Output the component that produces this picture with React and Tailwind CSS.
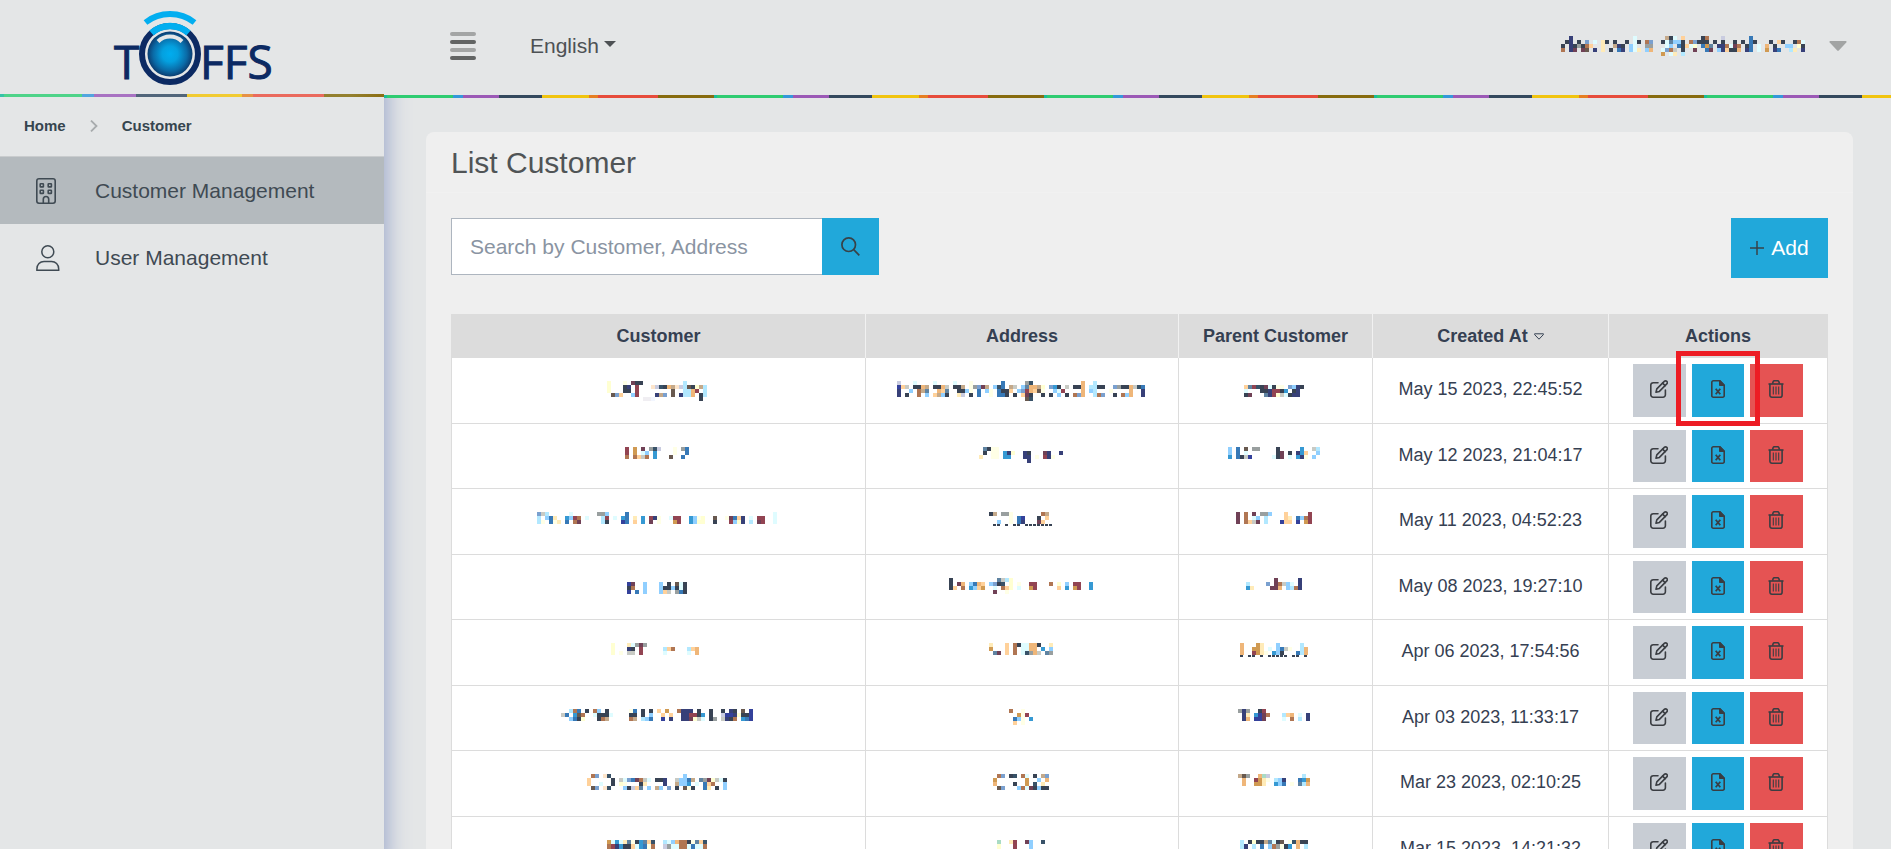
import React from 'react';

const PALETTE = {
  k: '#384354', n: '#374078', i: '#34419b', b: '#3779b7', c: '#3699d3', l: '#90cfff',
  s: '#b2e8ff', w: '#dffcff', W: '#f2f6ff', y: '#ffffd2', Y: '#ffffe6', e: '#ffebb8',
  o: '#efb679', t: '#d09a52', r: '#924452', m: '#704156', u: '#b07653', g: '#999f9f',
  q: '#c8cac4', p: '#ffd19a', d: '#5f83a1', a: '#7aa0cf', v: '#c9cce0', x: '#68594f',
  z: '#385268', f: '#fde5cb', F: '#f0eef2', h: '#c4a98a', G: '#a9dbc4',
};

const CELL = 4;

/* Pixelated block that stands in for a masked value. */
function Masked({ rows, tail, label }) {
  const cols = Math.max(...rows.map((r) => r.length));
  const count = Math.max(rows.length, 5);
  return (
    <svg
      role="img"
      aria-label={label}
      width={cols * CELL}
      height={count * CELL}
      shapeRendering="crispEdges"
      className="inline-block align-middle"
    >
      {rows.flatMap((row, y) =>
        [...row].map((ch, x) =>
          PALETTE[ch] ? (
            <rect key={`${x}-${y}`} x={x * CELL} y={y * CELL} width={CELL} height={CELL} fill={PALETTE[ch]} />
          ) : null
        )
      )}
      {tail
        ? [...tail].map((ch, x) =>
            PALETTE[ch] ? (
              <rect key={`t${x}`} x={x * CELL} y={rows.length * CELL} width={3} height={2} fill={PALETTE[ch]} />
            ) : null
          )
        : null}
    </svg>
  );
}

const ACCOUNT = [
  '..n...............w.......hkw.p....ku...v......b.............',
  '.kn.k.a.w.ek.k..k.wk.ua..kwdllk.uakkk.k.k..k.k.bk...k.pk..kuw',
  'k.nkgkup..e..hnk.lw..gg...wl.bkpwy.btd.nnuwmu.kb.w.o.k..ll.yk',
  'u.nm.mx.n.e.k.bn.lwe.lo..wauq.k..m..bm.lnpkko.nb.w.t.nb..se.n',
  '.........................t.we.s',
];

const ROWS = [
  {
    created: 'May 15 2023, 22:45:52',
    marked: true,
    customer: [
      'y...Y.mkk..........s.....',
      'y...kn.r...fvzkohfvsxkyhs',
      'y...kk.r........x..ssor.s',
      '.xap..lr....nha.x.nsso.ks',
      '.........FFW...........k.',
    ],
    address: [
      'v...w....w....w...Y.......b.....gz............o..s............',
      'ipq.kkoh.kkoq.kkh.Ygamh.lzb.hq.ldoohy.ack.q.kko.sskk..agkkoqzb',
      'n..l.uhd..opd..kklY.b.lY.bkkp.laropxY..lwr....o.ls...Y....o..n',
      'n.k..u.l.phlk..ev.k.b..Y.bbk.k.pmk..k.k.l.k.uao..sua..k.ulo..n',
      '................................xz............................',
    ],
    parent: ['', 'pdrzkmwkYY.alnk', 'w...kknrrkc.kn.', 'km...dnryqwknn.'],
  },
  {
    created: 'May 12 2023, 21:04:17',
    customer: ['r.t.m.gzv...Y.gb', 'r.t.wl.c....Y..b', 'u.upqu.c...x..b.'],
    address: ['.dkYY................', '.k.YY.cny..nk...mn..n', 'e..YY.cc...nn.Y.rnY', '............n'],
    parent: ['l.b.x.gg....k.....c..qs', 'l.b.w.......km.k.ncp..l', 'c.bkqi.....wkm.w.cnY.l.'],
  },
  {
    created: 'May 11 2023, 04:52:23',
    customer: [
      'aqs.....w......ggl....b....................................w',
      's.lbe..clru.w...sr.w.cb.e.c.rnY..wrr..clYy..x..Ymbpn.w.rr..w',
      'sY.bYe.b.um.....sk...ib.p.c.m.Y...tr..clyy..k...rlyn.s.mr..w',
    ],
    address: ['kh.ggY.......uh.', '.....Y.bi...k.p.', '..l..Y.bn...mp..'],
    addressTail: '.kk.k.kk.kkkkkkk',
    parent: ['m.u.m.ggl...p.....r', 'm.u.wl.s....pe.blur', 'm.upqm.s...ipp.i.tr'],
  },
  {
    created: 'May 08 2023, 19:27:10',
    customer: ['', 'im..l...l.k.xwk', 'ku..l...lkklkwk', 'i.b.l...lpq.gbk'],
    address: [
      'k...........dqsy....................',
      'k.mo.lbop.lakz.y.Y..rr...u.y.l.rr..c',
      'kp.u.clpt..w.upy.w..tr.....p.c.tr..c',
      '...........m..Y',
    ],
    parent: ['.......m.....n', 's....a.muqlw.n', 'ce....mmo.lsun'],
  },
  {
    created: 'Apr 06 2023, 17:54:56',
    customer: ['y...ewgmg..............', 'y...nk.r.....spu...spo', 'y.Y.qq.r.....w.....w.o'],
    address: ['e...p.ukwwook..e', 't...p.u.wwoo.c.l', '.dm.p.u.wzgoq.dg'],
    parent: ['o...te...l.....s.', 'o..tte.w.lbqY..so', 'o..rteY.clk...bso'],
    parentTail: 'k.kk.k.kkkkk.kk.k',
  },
  {
    created: 'Apr 03 2023, 11:33:17',
    customer: [
      '..sub.k.ul.k.....Yb.k.k.p.t..unnn.k..k..k.nk.x.i',
      'qb.cxu..wkkkw....kk.k.l..p.p..nnrrkc.k..viinykki',
      '..lbky...kuh.....uh.slb..i.n..nnmyqw.kg.qnku.cbi',
    ],
    address: ['u..Y..', '..tYr.', '.blY.c', '.p.Y..'],
    parent: ['gng..kr...........', '.ne.cimu...spo.w.n', '.no.iim....w.u.s.n'],
  },
  {
    created: 'Mar 23 2023, 02:10:25',
    customer: [
      '.ua.fz..................l..........',
      'p.....k.qwabmuqw.kkn..qllbh.dgmyqwk',
      'p..w..k.yY...ke....n..hllc.w.bpu..l',
      '.xa.fz...lkvpd.l.hl.a.k.xYk..be.k.l',
    ],
    address: ['.ua.kz.uw.k.ha', 't.......t..l.o', 'o....k..t.z.e.', '.xa...luwmklkk'],
    parent: ['hxg..oGv........s.', '.o..rteY.sln...bct', '.o..tte..clb.Y.dso'],
  },
  {
    created: 'Mar 15 2023, 14:21:32',
    customer: ['twcwedYkcdpz..swlouukYdpz', 'urnckkpwcbYu..vgwwuuwbwwu', 'urnckkpwcbYu..vgwwuuwbwwu'],
    address: ['G..er..ml..z', 'y...r...l...', 'y...r...l...'],
    parent: ['s.kykkhdwkx.Yzokk', 'sn.s.b.lugYkc.o.s', 'sn.s.b.lugYkc.o.s'],
  },
];

function Logo() {
  return (
    <svg width="180" height="84" viewBox="106 4 180 84" aria-label="TOFFS" role="img" className="overflow-visible">
      <defs>
        <radialGradient id="lens" cx="50%" cy="50%" r="50%">
          <stop offset="0" stopColor="#00adef" />
          <stop offset="0.35" stopColor="#04a0df" />
          <stop offset="0.75" stopColor="#0a6aa6" />
          <stop offset="1" stopColor="#0b3c70" />
        </radialGradient>
      </defs>
      <g fill="#0c2a63" stroke="#0c2a63" strokeWidth="1" className="font-['Open_Sans',sans-serif] text-[46px] font-medium">
        <text x="114" y="78">T</text>
        <text x="200" y="78">FFS</text>
      </g>
      <g fill="none">
        <circle cx="170" cy="53" r="28" stroke="#0c2a63" strokeWidth="6" />
        <path d="M151.5 32 A28 28 0 0 1 188.500 32" stroke="#02aef0" strokeWidth="6.500" />
        <path d="M145.500 21.500 A40 40 0 0 1 194.500 21.500" stroke="#02aef0" strokeWidth="6" />
      </g>
      <circle cx="170" cy="53" r="22.500" fill="url(#lens)" />
      <path d="M158 40.500 A17 17 0 0 1 182 40.500" fill="none" stroke="#e4e6e7" strokeWidth="4" />
    </svg>
  );
}

function BuildingIcon() {
  return (
    <svg width="20" height="26" viewBox="0 0 20 26" fill="none" stroke="currentColor" strokeWidth="1.600" aria-hidden="true">
      <rect x="0.800" y="0.800" width="18.400" height="24.400" rx="2.200" />
      <rect x="4.200" y="5.700" width="3.200" height="3.200" rx="0.500" />
      <rect x="12.200" y="5.700" width="3.200" height="3.200" rx="0.500" />
      <rect x="4.200" y="12.200" width="3.200" height="3.200" rx="0.500" />
      <rect x="12.200" y="12.200" width="3.200" height="3.200" rx="0.500" />
      <path d="M7.300 25.300 V21.200 A2.700 2.700 0 0 1 12.700 21.200 V25.300" />
    </svg>
  );
}

function UserIcon() {
  return (
    <svg width="24" height="26" viewBox="0 0 24 26" fill="none" stroke="currentColor" strokeWidth="1.500" aria-hidden="true">
      <circle cx="11.800" cy="6.800" r="6" />
      <path d="M0.900 25.200 V24 C0.900 19.500 4 16.500 8 16.500 H15.500 C19.500 16.500 22.700 19.500 22.700 24 V25.200 Z" />
    </svg>
  );
}

function EditIcon() {
  return (
    <svg width="18" height="18" viewBox="0 0 18 18" fill="none" stroke="currentColor" strokeWidth="1.600" strokeLinecap="round" strokeLinejoin="round" aria-hidden="true">
      <path d="M8 2.700 H3.200 A2.400 2.400 0 0 0 0.800 5.100 V14.800 A2.400 2.400 0 0 0 3.200 17.200 H13 A2.400 2.400 0 0 0 15.400 14.800 V10" />
      <path d="M6 12.300 L6.800 8.900 L14.300 1.400 A1.650 1.650 0 0 1 16.800 3.900 L9.400 11.400 Z" />
      <path d="M12.600 3.100 L15.100 5.600" />
    </svg>
  );
}

function FileIcon() {
  return (
    <svg width="14" height="18" viewBox="0 0 14 18" fill="none" stroke="currentColor" strokeWidth="1.600" strokeLinejoin="round" aria-hidden="true">
      <path d="M8.800 0.800 H2.300 A1.500 1.500 0 0 0 0.800 2.300 V15.700 A1.500 1.500 0 0 0 2.300 17.200 H11.700 A1.500 1.500 0 0 0 13.200 15.700 V5.200 Z" />
      <path d="M8.800 0.800 V5.200 H13.200 Z" fill="currentColor" />
      <path d="M4.700 8.700 L9.300 14.300 M9.300 8.700 L4.700 14.300" strokeWidth="1.800" />
    </svg>
  );
}

function TrashIcon() {
  return (
    <svg width="16" height="18" viewBox="0 0 16 18" fill="none" stroke="currentColor" strokeWidth="1.600" aria-hidden="true">
      <path d="M0.500 4 H15.500" />
      <path d="M4.500 3.700 L5.200 1.600 Q5.500 0.800 6.300 0.800 H9.700 Q10.500 0.800 10.800 1.600 L11.500 3.700" />
      <path d="M1.900 4 V15.200 A2 2 0 0 0 3.900 17.200 H12.100 A2 2 0 0 0 14.100 15.200 V4" />
      <path d="M5.300 6.500 V14.500 M8 6.500 V14.500 M10.700 6.500 V14.500" strokeWidth="1.100" />
    </svg>
  );
}

function NavItem({ icon, active, children }) {
  return (
    <a
      href="#"
      aria-current={active ? 'page' : undefined}
      className={`flex h-[67px] items-center pl-9 text-[21px] text-[#3f4a53] ${active ? 'bg-[#b4babe]' : ''}`}
    >
      <span className="w-[59px]">{icon}</span>
      {children}
    </a>
  );
}

function Heading({ children }) {
  return (
    <th scope="col" className="border-r border-[#f1f1f1] font-bold last:border-[#dcdcdc]">
      {children}
    </th>
  );
}

const CELL_CLASS = 'border-r border-b border-[#dcdcdc] p-0';
const MASKED_CELL_CLASS = 'border-r border-b border-[#dcdcdc] p-0 pr-[3px]';
const ACTION_CLASS = 'flex items-center justify-center pb-[3px] group-odd:h-[53px] group-even:h-[52px]';

export default function App() {
  return (
    <div className="flex h-screen overflow-hidden bg-[#e4e6e7] font-['Liberation_Sans',Arial,sans-serif] text-[#354052]">
      <aside className="z-10 flex w-96 shrink-0 flex-col bg-[#e4e6e7] shadow-[2px_20px_22px_0_#97a4c9]">
        <div className="flex h-[94px] items-center justify-center pl-2">
          <Logo />
        </div>
        <div className="h-[3px] bg-[linear-gradient(to_right,#35c3a8_4px,#4ed389_4px_82px,#52a5df_82px_94px,#a872c2_94px_136px,#51657a_136px_187px,#f1cb32_187px_242px,#e69147_242px_253px,#ea6a5e_253px_324px,#93802f_324px_350px,#8b6d12_384px)]" />
        <nav aria-label="Breadcrumb" className="flex h-[60px] items-center border-b border-[#c9ccce] pb-px pl-6 text-[15px] font-bold text-[#36454f]">
          <a href="#">Home</a>
          <svg width="8" height="12" viewBox="0 0 8 12" className="mx-6 shrink-0" fill="none" stroke="#a7abad" strokeWidth="1.800" aria-hidden="true">
            <path d="M1 0.600 L6.500 6 L1 11.400" />
          </svg>
          <a href="#">Customer</a>
        </nav>
        <nav aria-label="Main">
          <NavItem active icon={<BuildingIcon />}>Customer Management</NavItem>
          <NavItem icon={<UserIcon />}>User Management</NavItem>
        </nav>
      </aside>

      <div className="flex min-w-0 flex-1 flex-col">
        <header className="z-20 shrink-0 bg-[#e4e6e7]">
          <div className="flex h-[95px] items-center pr-11 pb-[3px] pl-[66px]">
            <button type="button" aria-label="Toggle menu" className="flex w-[26px] flex-col gap-1">
              <span className="h-1 rounded-sm bg-[#a3a5a5]" />
              <span className="h-1 rounded-sm bg-[#626464]" />
              <span className="h-1 rounded-sm bg-[#a3a5a5]" />
              <span className="h-1 rounded-sm bg-[#626464]" />
            </button>
            <button type="button" className="ml-[54px] flex items-center gap-[5px] text-[21px] text-[#4d5154]">
              English
              <svg width="12" height="6" viewBox="0 0 12 6" fill="currentColor" className="mb-1" aria-hidden="true">
                <path d="M0 0 H12 L6 6 Z" />
              </svg>
            </button>
            <button type="button" className="ml-auto flex items-center gap-6">
              <Masked rows={ACCOUNT} label="Account" />
              <svg width="18" height="10" viewBox="0 0 18 10" fill="#a2a4a4" aria-hidden="true">
                <path d="M1 0 H17 Q18 0.300 17.300 1.400 L9.800 9.400 Q9 10 8.200 9.400 L0.700 1.400 Q0 0.300 1 0 Z" />
              </svg>
            </button>
          </div>
          <div className="h-[3px] bg-[repeating-linear-gradient(to_right,#1abc9c_0_3px,#2ecc71_3px_69px,#3498db_69px_79px,#9b59b6_79px_115px,#34495e_115px_158px,#f1c40f_158px_205px,#e67e22_205px_214px,#e74c3c_214px_274px,#876b0e_274px_330px)]" />
        </header>

        <main className="min-h-0 flex-1 overflow-y-auto pt-[34px] pr-[38px] pl-[42px] [scrollbar-width:none]">
          <section className="relative z-10 rounded-t-lg bg-[#efefef]">
            <h1 className="h-[61px] border-b border-[#f1f1f1] px-[25px] pt-[13px] text-[30px] leading-9 text-[#505456]">List Customer</h1>
            <div className="px-[25px] pt-[25px]">
              <div className="flex items-start justify-between">
                <form role="search" className="flex h-[57px]" onSubmit={(e) => e.preventDefault()}>
                  <input
                    type="search"
                    aria-label="Search by Customer, Address"
                    placeholder="Search by Customer, Address"
                    className="w-[371px] border border-r-0 border-[#adb5bf] bg-white px-[18px] text-[21px] outline-none placeholder:text-[#8a94a2]"
                  />
                  <button type="submit" aria-label="Search" className="flex w-[57px] items-center justify-center bg-[#21a8da] pr-px pb-px text-[#374248]">
                    <svg width="19" height="19" viewBox="0 0 19 19" fill="none" stroke="currentColor" strokeWidth="1.700" aria-hidden="true">
                      <circle cx="7.700" cy="7.700" r="6.800" />
                      <path d="M12.700 12.700 L18.300 18.300" />
                    </svg>
                  </button>
                </form>
                <button type="button" className="flex h-[60px] w-[97px] items-center justify-center gap-[7px] bg-[#21a8da] text-[21px] text-white">
                  <svg width="14" height="14" viewBox="0 0 14 14" stroke="#374248" strokeWidth="1.500" aria-hidden="true">
                    <path d="M7 0 V14 M0 7 H14" />
                  </svg>
                  Add
                </button>
              </div>

              <table className="mt-9 w-full table-fixed border-separate border-spacing-0 border-l border-[#dcdcdc] text-center text-[18px]">
                <colgroup>
                  <col className="w-[414px]" />
                  <col className="w-[313px]" />
                  <col className="w-[194px]" />
                  <col className="w-[236px]" />
                  <col className="w-[219px]" />
                </colgroup>
                <thead>
                  <tr className="h-11 bg-[#dcdcdc]">
                    <Heading>Customer</Heading>
                    <Heading>Address</Heading>
                    <Heading>Parent Customer</Heading>
                    <Heading>
                      <button type="button" className="inline-flex items-center gap-1.5 font-bold">
                        Created At
                        <svg width="10" height="7" viewBox="0 0 10 7" fill="none" stroke="currentColor" strokeLinejoin="round" aria-hidden="true">
                          <path d="M0.600 0.800 H9.400 V1.600 L5 6.200 L0.600 1.600 Z" />
                        </svg>
                      </button>
                    </Heading>
                    <Heading>Actions</Heading>
                  </tr>
                </thead>
                <tbody>
                  {ROWS.map((row) => (
                    <tr key={row.created} className="group bg-white">
                      <td className={MASKED_CELL_CLASS}>
                        <Masked rows={row.customer} label="Customer" />
                      </td>
                      <td className={MASKED_CELL_CLASS}>
                        <Masked rows={row.address} tail={row.addressTail} label="Address" />
                      </td>
                      <td className={MASKED_CELL_CLASS}>
                        <Masked rows={row.parent} tail={row.parentTail} label="Parent customer" />
                      </td>
                      <td className="border-r border-b border-[#dcdcdc] p-0 pb-0.5">{row.created}</td>
                      <td className={CELL_CLASS}>
                        <div className="flex justify-center gap-1.5 py-1.5 text-[#3a3d42]">
                          <button type="button" aria-label="Edit" className={`w-[53px] bg-[#c8cdd4] pr-px ${ACTION_CLASS}`}>
                            <EditIcon />
                          </button>
                          <div className="relative">
                            <button type="button" aria-label="Export" className={`w-[52px] bg-[#21a8da] ${ACTION_CLASS}`}>
                              <FileIcon />
                            </button>
                            {row.marked && (
                              <span className="pointer-events-none absolute -top-[13px] -right-4 -bottom-[9px] -left-4 z-10 border-[5px] border-[#ed1c24]" />
                            )}
                          </div>
                          <button type="button" aria-label="Delete" className={`w-[53px] bg-[#e55353] pr-px ${ACTION_CLASS}`}>
                            <TrashIcon />
                          </button>
                        </div>
                      </td>
                    </tr>
                  ))}
                </tbody>
              </table>
            </div>
          </section>
        </main>
      </div>
    </div>
  );
}
